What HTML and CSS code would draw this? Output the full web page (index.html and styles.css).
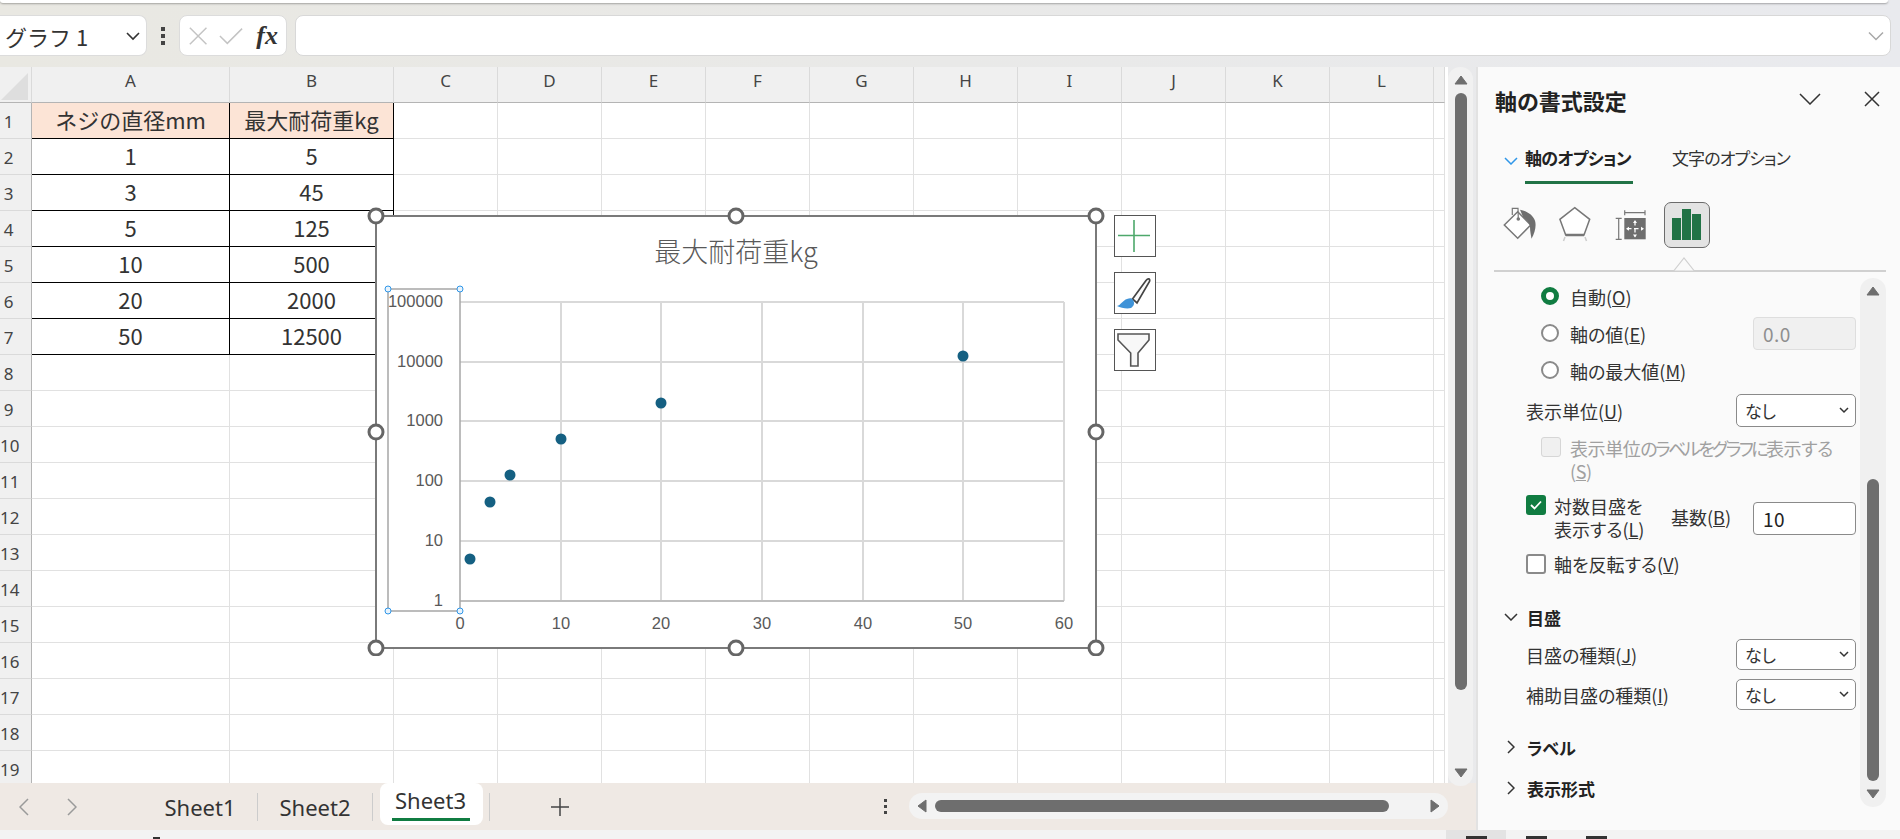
FILE: index.html
```html
<!DOCTYPE html>
<html lang="ja">
<head>
<meta charset="utf-8">
<title>Excel</title>
<link rel="stylesheet" href="styles.css">
</head>
<body>
<div class="ribbon-edge"></div>
<div class="formula-bar">
  <div class="name-box"><span>グラフ 1</span><svg class="ic" width="16" height="10" viewBox="0 0 16 10"><path d="M2 2l6 6 6-6" fill="none" stroke="#333" stroke-width="1.6"/></svg></div>
  <div class="vdots"><i></i><i></i><i></i></div>
  <div class="fx-box">
    <svg width="22" height="22" viewBox="0 0 22 22"><path d="M2 2l18 18M20 2L2 20" fill="none" stroke="#c4c4c4" stroke-width="1.6"/></svg>
    <svg width="26" height="22" viewBox="0 0 26 22"><path d="M1 11l8 8L25 3" fill="none" stroke="#c4c4c4" stroke-width="1.6"/></svg>
    <span class="fx">fx</span>
  </div>
  <div class="formula-input"><svg width="16" height="10" viewBox="0 0 16 10"><path d="M1 1.5l7 7 7-7" fill="none" stroke="#a8a8a8" stroke-width="1.5"/></svg></div>
</div>
<div class="main">
  <div class="workbook">
    <div class="sheet-row">
      <div class="sheet">
        <table class="grid">
          <colgroup><col class="c-head"><col class="c-a"><col class="c-b"><col class="c-n"><col class="c-n"><col class="c-n"><col class="c-n"><col class="c-n"><col class="c-n"><col class="c-n"><col class="c-n"><col class="c-n"><col class="c-n"><col class="c-last"></colgroup>
          <thead><tr><th class="corner"><svg width="29" height="29" viewBox="0 0 29 29"><path d="M28 1V28H1z" fill="#dedede"/></svg></th><th>A</th><th>B</th><th>C</th><th>D</th><th>E</th><th>F</th><th>G</th><th>H</th><th>I</th><th>J</th><th>K</th><th>L</th><th></th></tr></thead>
          <tbody>
            <tr><th>1</th><td class="b hd">ネジの直径mm</td><td class="b hd">最大耐荷重kg</td><td></td><td></td><td></td><td></td><td></td><td></td><td></td><td></td><td></td><td></td><td></td></tr>
            <tr><th>2</th><td class="b">1</td><td class="b">5</td><td></td><td></td><td></td><td></td><td></td><td></td><td></td><td></td><td></td><td></td><td></td></tr>
            <tr><th>3</th><td class="b">3</td><td class="b">45</td><td></td><td></td><td></td><td></td><td></td><td></td><td></td><td></td><td></td><td></td><td></td></tr>
            <tr><th>4</th><td class="b">5</td><td class="b">125</td><td></td><td></td><td></td><td></td><td></td><td></td><td></td><td></td><td></td><td></td><td></td></tr>
            <tr><th>5</th><td class="b">10</td><td class="b">500</td><td></td><td></td><td></td><td></td><td></td><td></td><td></td><td></td><td></td><td></td><td></td></tr>
            <tr><th>6</th><td class="b">20</td><td class="b">2000</td><td></td><td></td><td></td><td></td><td></td><td></td><td></td><td></td><td></td><td></td><td></td></tr>
            <tr><th>7</th><td class="b">50</td><td class="b">12500</td><td></td><td></td><td></td><td></td><td></td><td></td><td></td><td></td><td></td><td></td><td></td></tr>
            <tr><th>8</th><td></td><td></td><td></td><td></td><td></td><td></td><td></td><td></td><td></td><td></td><td></td><td></td><td></td></tr>
            <tr><th>9</th><td></td><td></td><td></td><td></td><td></td><td></td><td></td><td></td><td></td><td></td><td></td><td></td><td></td></tr>
            <tr><th>10</th><td></td><td></td><td></td><td></td><td></td><td></td><td></td><td></td><td></td><td></td><td></td><td></td><td></td></tr>
            <tr><th>11</th><td></td><td></td><td></td><td></td><td></td><td></td><td></td><td></td><td></td><td></td><td></td><td></td><td></td></tr>
            <tr><th>12</th><td></td><td></td><td></td><td></td><td></td><td></td><td></td><td></td><td></td><td></td><td></td><td></td><td></td></tr>
            <tr><th>13</th><td></td><td></td><td></td><td></td><td></td><td></td><td></td><td></td><td></td><td></td><td></td><td></td><td></td></tr>
            <tr><th>14</th><td></td><td></td><td></td><td></td><td></td><td></td><td></td><td></td><td></td><td></td><td></td><td></td><td></td></tr>
            <tr><th>15</th><td></td><td></td><td></td><td></td><td></td><td></td><td></td><td></td><td></td><td></td><td></td><td></td><td></td></tr>
            <tr><th>16</th><td></td><td></td><td></td><td></td><td></td><td></td><td></td><td></td><td></td><td></td><td></td><td></td><td></td></tr>
            <tr><th>17</th><td></td><td></td><td></td><td></td><td></td><td></td><td></td><td></td><td></td><td></td><td></td><td></td><td></td></tr>
            <tr><th>18</th><td></td><td></td><td></td><td></td><td></td><td></td><td></td><td></td><td></td><td></td><td></td><td></td><td></td></tr>
            <tr><th>19</th><td></td><td></td><td></td><td></td><td></td><td></td><td></td><td></td><td></td><td></td><td></td><td></td><td></td></tr>
          </tbody>
        </table>

        <svg class="chart" width="740" height="450" viewBox="366 206 740 450">
          <rect x="376" y="216" width="720" height="432" fill="#fff" stroke="#7a7a7a" stroke-width="2"/>
          <text class="chart-title" x="736" y="262" text-anchor="middle">最大耐荷重kg</text>
          <g stroke="#d9d9d9" stroke-width="2">
            <path d="M460 302H1064M460 362H1064M460 421H1064M460 481H1064M460 541H1064"/>
            <path d="M561 302V601M661 302V601M762 302V601M863 302V601M963 302V601M1064 302V601"/>
          </g>
          <path d="M460 601H1064" stroke="#bfbfbf" stroke-width="2"/>
          <rect x="388" y="289" width="72" height="322" fill="none" stroke="#a6a6a6" stroke-width="1.5"/>
          <g fill="#156082">
            <circle cx="470" cy="559" r="5.5"/><circle cx="490" cy="502" r="5.5"/><circle cx="510" cy="475" r="5.5"/>
            <circle cx="561" cy="439" r="5.5"/><circle cx="661" cy="403" r="5.5"/><circle cx="963" cy="356" r="5.5"/>
          </g>
          <g class="axis" text-anchor="end">
            <text x="443" y="307">100000</text><text x="443" y="367">10000</text><text x="443" y="426">1000</text>
            <text x="443" y="486">100</text><text x="443" y="546">10</text><text x="443" y="606">1</text>
          </g>
          <g class="axis" text-anchor="middle">
            <text x="460" y="629">0</text><text x="561" y="629">10</text><text x="661" y="629">20</text><text x="762" y="629">30</text>
            <text x="863" y="629">40</text><text x="963" y="629">50</text><text x="1064" y="629">60</text>
          </g>
          <g fill="#e8f3fc" stroke="#2f96e8" stroke-width="1">
            <circle cx="388" cy="289" r="3"/><circle cx="460" cy="289" r="3"/><circle cx="388" cy="611" r="3"/><circle cx="460" cy="611" r="3"/>
          </g>
          <g fill="#fff" stroke="#666" stroke-width="3">
            <circle cx="376" cy="216" r="7"/><circle cx="736" cy="216" r="7"/><circle cx="1096" cy="216" r="7"/>
            <circle cx="376" cy="432" r="7"/><circle cx="1096" cy="432" r="7"/>
            <circle cx="376" cy="648" r="7"/><circle cx="736" cy="648" r="7"/><circle cx="1096" cy="648" r="7"/>
          </g>
        </svg>

        <div class="chart-tools">
          <div class="tool"><svg width="40" height="40" viewBox="0 0 40 40"><path d="M3 19.500H35M19 4V36" stroke="#4ea86b" stroke-width="1.6" fill="none"/></svg></div>
          <div class="tool"><svg width="40" height="40" viewBox="0 0 40 40"><path d="M17.500 26L31 7.500c2-2.500 4.500-2 3.500 1L22 30z" fill="#fafafa" stroke="#444" stroke-width="1.700"/><path d="M2 33c4-1 6-6 10-7 3-1 5-1 6 1 2 3 1 6-2 8-4 1-10 0-14-2z" fill="#3f93d8"/></svg></div>
          <div class="tool"><svg width="40" height="40" viewBox="0 0 40 40"><path d="M3 4H34V10L23 23V36H15.700V23L3 10z" fill="#f8f8f8" stroke="#555" stroke-width="1.600"/></svg></div>
        </div>
      </div>
      <div class="vscroll">
        <svg width="14" height="10" viewBox="0 0 14 10"><path d="M7 1l6 8H1z" fill="#6e6e6e" stroke="#6e6e6e" stroke-linejoin="round"/></svg>
        <div class="vthumb"></div>
        <svg width="14" height="10" viewBox="0 0 14 10"><path d="M7 9L1 1h12z" fill="#6e6e6e" stroke="#6e6e6e" stroke-linejoin="round"/></svg>
      </div>
    </div>
    <div class="tabs">
      <div class="tab-nav">
        <svg width="10" height="18" viewBox="0 0 10 18"><path d="M9 1L1 9l8 8" fill="none" stroke="#9a9a9a" stroke-width="1.500"/></svg>
        <svg width="10" height="18" viewBox="0 0 10 18"><path d="M1 1l8 8-8 8" fill="none" stroke="#9a9a9a" stroke-width="1.500"/></svg>
      </div>
      <div class="tab t1">Sheet1</div>
      <div class="tab t2">Sheet2</div>
      <div class="tab active">Sheet3</div>
      <div class="tab-sep"></div>
      <svg class="plus" width="18" height="18" viewBox="0 0 18 18"><path d="M0 9H18M9 0V18" stroke="#444" stroke-width="1.500"/></svg>
      <div class="vdots small"><i></i><i></i><i></i></div>
      <div class="hscroll">
        <svg width="10" height="14" viewBox="0 0 10 14"><path d="M1 7l8-6v12z" fill="#6e6e6e" stroke="#6e6e6e" stroke-linejoin="round"/></svg>
        <div class="hthumb"></div>
        <svg width="10" height="14" viewBox="0 0 10 14"><path d="M9 7L1 1v12z" fill="#6e6e6e" stroke="#6e6e6e" stroke-linejoin="round"/></svg>
      </div>
    </div>
  </div>

  <aside class="panel">
    <div class="panel-head">
      <h1>軸の書式設定</h1>
      <svg class="p-chev" width="22" height="12" viewBox="0 0 22 12"><path d="M1 1l10 10L21 1" fill="none" stroke="#333" stroke-width="1.500"/></svg>
      <svg class="p-close" width="16" height="16" viewBox="0 0 16 16"><path d="M1 1l14 14M15 1L1 15" fill="none" stroke="#333" stroke-width="1.500"/></svg>
    </div>
    <div class="panel-tabs">
      <svg width="14" height="8" viewBox="0 0 14 8"><path d="M1 1l6 6 6-6" fill="none" stroke="#2f96e8" stroke-width="1.500"/></svg>
      <div class="ptab on">軸のオプション</div>
      <div class="ptab">文字のオプション</div>
    </div>
    <div class="panel-icons">
      <svg class="i-fill" width="36" height="36" viewBox="0 0 36 36"><path d="M1.300 19L14.700 5.700 27.700 19 14.700 32.300z" fill="#fff" stroke="#777" stroke-width="1.500"/><path d="M9.300 9V2.300H15L15.300 13" fill="none" stroke="#777" stroke-width="1.200"/><circle cx="15.300" cy="13" r="1.800" fill="#777"/><path d="M17 3.700c6 1 13 5 15 11 1.500 5 0 12-3.500 18-.5-4-1.500-7-1.500-12 0-4-4-7-7-10z" fill="#6e6e6e"/></svg>
      <svg class="i-shape" width="32" height="38" viewBox="0 0 32 38"><path d="M15.700 2.700L30.700 14.300 25 30H6.700L.9 14.300z" fill="#fff" stroke="#777" stroke-width="1.500"/><path d="M6.700 30H25" stroke="#777" stroke-width="2.500"/><path d="M6 32L4.500 36M26 32l1.500 4" stroke="#ccc" stroke-width="1.500"/></svg>
      <svg class="i-size" width="32" height="36" viewBox="0 0 32 36"><path d="M9.700 6.700H30M9.700 4.200V9.200M30 4.200V9.200M3.700 12.300V33.300M.7 12.300H6.700M.7 33.300H6.700" fill="none" stroke="#777" stroke-width="1.200"/><rect x="9.300" y="12" width="21.400" height="21.300" fill="#6e6e6e"/><path d="M20 15V30.500M12 22.700H28" stroke="#fff" stroke-width="1.300" stroke-dasharray="4.500 2.500"/><path d="M20 14l-2 3h4zM20 31.500l-2-3h4zM11 22.700l3-2v4zM29 22.700l-3-2v4z" fill="#fff"/></svg>
      <div class="i-bars"><svg width="44" height="44" viewBox="0 0 44 44"><path d="M7 15h9v22H7zM17 6h9v31h-9zM27 11h9v26h-9z" fill="#217346"/></svg></div>
    </div>
    <div class="panel-rule"><svg width="22" height="14" viewBox="0 0 22 14"><path d="M0 13.500H1L11 1l10 12.500h1" fill="#fafafa" stroke="#d0d0d0" stroke-width="1.200"/></svg></div>
    <div class="panel-body">
      <div class="opts">
        <div class="row r-radio"><span class="radio on"></span><span>自動(<u>O</u>)</span></div>
        <div class="row r-radio"><span class="radio"></span><span>軸の値(<u>E</u>)</span><span class="field ro">0.0</span></div>
        <div class="row r-radio"><span class="radio"></span><span>軸の最大値(<u>M</u>)</span></div>
        <div class="row r-sel mt5"><span>表示単位(<u>U</u>)</span><span class="select tall">なし<svg width="10" height="7" viewBox="0 0 10 7"><path d="M1 1l4 4 4-4" fill="none" stroke="#333" stroke-width="1.500"/></svg></span></div>
        <div class="row r-disabled"><span class="check dis"></span><span class="dis-text">表示単位<span class="kana">のラベルをグラフに</span>表示する<br>(<u>S</u>)</span></div>
        <div class="row r-log"><span class="check on"><svg width="14" height="12" viewBox="0 0 14 12"><path d="M2 6l3.500 3.500L12 2.500" fill="none" stroke="#fff" stroke-width="1.800"/></svg></span><span class="log-text">対数目盛を<br>表示する(<u>L</u>)</span><span class="base">基数(<u>B</u>)</span><span class="field">10</span></div>
        <div class="row r-rev"><span class="check"></span><span>軸を反転する(<u>V</u>)</span></div>
        <div class="sec mt31"><svg width="14" height="8" viewBox="0 0 14 8"><path d="M1 1l6 6 6-6" fill="none" stroke="#333" stroke-width="1.500"/></svg><b>目盛</b></div>
        <div class="row r-sel2 mt10"><span>目盛の種類(<u>J</u>)</span><span class="select">なし<svg width="10" height="7" viewBox="0 0 10 7"><path d="M1 1l4 4 4-4" fill="none" stroke="#333" stroke-width="1.500"/></svg></span></div>
        <div class="row r-sel2 mt9"><span>補助目盛の種類(<u>I</u>)</span><span class="select">なし<svg width="10" height="7" viewBox="0 0 10 7"><path d="M1 1l4 4 4-4" fill="none" stroke="#333" stroke-width="1.500"/></svg></span></div>
        <div class="sec mt25"><svg class="cr" width="8" height="14" viewBox="0 0 8 14"><path d="M1 1l6 6-6 6" fill="none" stroke="#333" stroke-width="1.500"/></svg><b>ラベル</b></div>
        <div class="sec mt17"><svg class="cr" width="8" height="14" viewBox="0 0 8 14"><path d="M1 1l6 6-6 6" fill="none" stroke="#333" stroke-width="1.500"/></svg><b>表示形式</b></div>
      </div>
      <div class="pscroll">
        <svg width="14" height="10" viewBox="0 0 14 10"><path d="M7 1l6 8H1z" fill="#6e6e6e" stroke="#6e6e6e" stroke-linejoin="round"/></svg>
        <div class="pthumb"></div>
        <svg width="14" height="10" viewBox="0 0 14 10"><path d="M7 9L1 1h12z" fill="#6e6e6e" stroke="#6e6e6e" stroke-linejoin="round"/></svg>
      </div>
    </div>
  </aside>
</div>
<div class="status">
  <div class="st-mark"></div>
  <div class="views">
    <div class="view on"><i></i></div>
    <div class="view"><i></i></div>
    <div class="view"><i></i></div>
  </div>
</div>
</body>
</html>
```
FILE: styles.css
```css
* { box-sizing: border-box; }
html, body { margin: 0; padding: 0; }
body {
  width: 1900px; height: 839px; overflow: hidden;
  display: flex; flex-direction: column;
  background: linear-gradient(90deg, #e9e8e2, #e9eaee);
  font-family: "Noto Sans CJK JP", "Noto Sans", sans-serif;
  color: #333;
}
.ribbon-edge {
  height: 3px; flex: none; width: 1888px;
  background: #fff; border-radius: 0 0 8px 8px;
  box-shadow: 0 1px 2px rgba(0,0,0,.3);
}
.formula-bar {
  height: 41px; flex: none; margin-top: 12px;
  display: flex; align-items: stretch;
}
.name-box {
  width: 147px; background: #fff; border: 1px solid #dcdcdc; border-left: 0;
  border-radius: 0 8px 8px 0;
  display: flex; align-items: center; justify-content: space-between;
  padding: 0 5px 0 5px; font-size: 22px; color: #333;
}
.vdots { width: 32px; display: flex; flex-direction: column; align-items: center; justify-content: center; gap: 3px; }
.vdots i { width: 4px; height: 4px; background: #444; display: block; }
.fx-box {
  width: 108px; background: #fff; border: 1px solid #dcdcdc; border-radius: 8px;
  display: flex; align-items: center; padding: 0 8px; gap: 11px;
}
.fx { font-family: "Liberation Serif", serif; font-style: italic; font-weight: 700; font-size: 26px; color: #333; line-height: 1; margin-left: 2px; }
.formula-input {
  width: 1596px; margin-left: 8px; background: #fff; border: 1px solid #d8d8d8; border-radius: 8px;
  display: flex; align-items: center; justify-content: flex-end; padding-right: 6px;
}
.main { flex: none; height: 763px; margin-top: 11px; display: flex; }
.workbook { width: 1476px; display: flex; flex-direction: column; }
.sheet-row { height: 716px; display: flex; position: relative; }
.sheet { width: 1448px; height: 716px; position: relative; overflow: hidden; background: #fff; }

.grid { border-collapse: separate; border-spacing: 0; table-layout: fixed; width: 1445px; background: #fff; }
.c-head { width: 32px; } .c-a { width: 198px; } .c-b { width: 164px; } .c-n { width: 104px; } .c-last { width: 11px; }
.grid thead th {
  height: 36px; background: #f0f0f0; font-weight: 400; font-size: 17px; color: #444;
  border-right: 1px solid #dadada; border-bottom: 1px solid #b4b4b4;
  padding: 0 0 9px; text-align: center; font-family: "Noto Sans", sans-serif; line-height: 1;
}
.grid thead th.corner { padding: 0; vertical-align: middle; }
.corner svg { display: block; margin: 3px 0 0; }
.grid tbody th {
  height: 36px; background: #f0f0f0; font-weight: 400; font-size: 17px; color: #444;
  border-right: 1px solid #b4b4b4; border-bottom: 1px solid #dadada;
  text-align: center; padding: 2px 14px 0 0; font-family: "Noto Sans", sans-serif; line-height: 1; overflow: hidden;
}
.grid td {
  height: 36px; border-right: 1px solid #e1e1e1; border-bottom: 1px solid #e1e1e1;
  padding: 0 0 4px; font-size: 22px; text-align: center; color: #333; line-height: 1;
}
.grid td.b { border-right: 1px solid #000; border-bottom: 1px solid #000; }
.grid td.hd { background: #fce4d6; }

.chart { position: absolute; left: 366px; top: 139px; }
.chart-title { font-size: 27px; fill: #595959; font-family: "Noto Sans CJK JP", sans-serif; font-weight: 300; }
.axis text { font-family: "Liberation Sans", sans-serif; font-size: 16.500px; fill: #595959; }
.chart-tools { position: absolute; left: 1114px; top: 148px; display: flex; flex-direction: column; gap: 15px; }
.tool { width: 42px; height: 42px; border: 1.500px solid #555; background: #fff; }
.tool svg { display: block; }

.vscroll {
  width: 25px; height: 719px; background: #f1f1f1; border-radius: 12px; position: relative; z-index: 2;
  display: flex; flex-direction: column; align-items: center; padding: 8px 0 8px; justify-content: space-between;
}
.vthumb { width: 12px; flex: 1; background: #6e6e6e; border-radius: 6px; margin: 8px 0 78px; }

.tabs {
  height: 47px; display: flex; align-items: center; position: relative;
  background: #efe9e4; font-family: "Noto Sans", sans-serif;
}
.tab-nav { width: 148px; padding-left: 19px; display: flex; gap: 38px; flex: none; }
.tab { font-size: 22px; color: #333; flex: none; text-align: center; line-height: 1; }
.t1 { width: 110px; border-right: 1px solid #ccc; height: 28px; padding: 3px 5px 0 0; }
.t2 { width: 115px; height: 28px; padding-top: 3px; border-right: 1px solid #ccc; }
.tab.active {
  width: 103px; height: 42px; margin: 0 0 0 7px; background: #fff; border-radius: 8px;
  align-self: flex-start; padding: 6px 2px 0 0; position: relative;
}
.tab.active::after { content: ""; position: absolute; left: 12px; right: 13px; top: 35px; height: 3px; background: #107c41; }
.tab-sep { width: 1px; height: 28px; background: #ccc; margin-left: 6px; flex: none; }
.plus { margin-left: 61px; flex: none; }
.vdots.small { width: 10px; margin-left: 311px; flex: none; }
.vdots.small i { width: 3px; height: 3px; }
.hscroll {
  width: 539px; height: 26px; background: #f3f3f3; border-radius: 13px; margin-left: 19px; flex: none;
  display: flex; align-items: center; padding: 0 8px; margin-top: -2px;
}
.hthumb { height: 12px; width: 454px; background: #6e6e6e; border-radius: 6px; margin: 0 41px 0 8px; }

.panel { width: 424px; height: 763px; background: #fafafa; border-left: 2px solid #e2e2e2; display: flex; flex-direction: column; flex: none; }
.panel-head { height: 65px; display: flex; align-items: center; padding: 0 0 0 17px; flex: none; }
.panel-head h1 { margin: 0; font-size: 22px; font-weight: 700; color: #222; line-height: 1; width: 304px; font-feature-settings: "palt"; }
.p-chev { margin-top: -1px; }
.p-close { margin-left: 43px; margin-top: -1px; }
.panel-tabs { height: 52px; display: flex; align-items: flex-start; padding-left: 26px; flex: none; }
.panel-tabs svg { margin-top: 25px; }
.ptab { font-size: 17px; line-height: 1; padding: 17px 0 0 0; height: 52px; font-feature-settings: "palt"; color: #333; margin-left: 39px; letter-spacing: -.9px; }
.ptab.on { font-weight: 700; margin-left: 7px; width: 108px; border-bottom: 3px solid #217346; white-space: nowrap; color: #222; letter-spacing: -.7px; }
.panel-icons { height: 85px; padding: 18px 0 0 25px; display: flex; align-items: flex-start; flex: none; }
.i-fill { margin-top: 4px; }
.i-shape { margin: 3px 0 0 20px; }
.i-size { margin: 4px 0 0 24px; }
.i-bars { width: 46px; height: 46px; background: #e3e3e3; border: 1.500px solid #6b6b6b; border-radius: 7px; margin: 0 0 0 17px; }
.i-bars svg { display: block; }
.panel-rule { height: 2px; background: #d0d0d0; margin: 1px 14px 0 16px; position: relative; flex: none; }
.panel-rule svg { position: absolute; left: 179px; top: -13px; }

.panel-body { display: flex; flex: 1; min-height: 0; padding-top: 6px; }
.opts { width: 382px; padding: 0 4px 0 48px; font-size: 18px; color: #333; font-feature-settings: "palt"; }
.pscroll {
  width: 26px; height: 529px; background: #f0f0f0; border-radius: 13px;
  display: flex; flex-direction: column; align-items: center; justify-content: space-between; padding: 8px 0;
}
.pthumb { width: 12px; flex: 1; background: #6e6e6e; border-radius: 6px; margin: 183px 0 8px; }
.row { display: flex; align-items: center; line-height: 1; }
.r-radio { height: 37px; padding-left: 15px; }
.radio { width: 18px; height: 18px; border-radius: 50%; border: 2.500px solid #8a8a8a; background: #fff; margin-right: 11px; flex: none; position: relative; top: -1px; }
.radio.on { border: 5px solid #107c41; }
.field { margin-left: auto; width: 103px; height: 33px; border: 1px solid #8a8a8a; border-radius: 4px; background: #fff; padding: 0 9px; line-height: 31px; font-size: 19px; letter-spacing: .5px; color: #222; }
.field.ro { background: #f0f0f0; border-color: #dedede; color: #8f8f8f; }
.select { margin-left: auto; width: 120px; height: 31px; border: 1px solid #8a8a8a; border-radius: 5px; background: #fff; display: flex; align-items: center; justify-content: space-between; padding: 0 6px 0 8px; font-size: 17px; }
.select.tall { height: 33px; }
.r-sel { height: 33px; }
.r-disabled { align-items: flex-start; margin-top: 10px; padding-left: 15px; }
.check { width: 20px; height: 20px; border: 2.500px solid #8a8a8a; border-radius: 3px; background: #fff; flex: none; margin-right: 8px; display: flex; align-items: center; justify-content: center; }
.check.dis { border: 1.500px solid #d6d6d6; background: #f0f0f0; margin-right: 9px; }
.check.on { background: #107c41; border: 0; }
.dis-text { color: #a0a0a0; line-height: 23px; letter-spacing: -.4px; }
.kana { letter-spacing: -2.600px; }
.r-log { margin-top: 12px; height: 47px; align-items: flex-start; }
.log-text { line-height: 23px; width: 117px; }
.base { margin-top: 13px; }
.r-log .field { margin-top: 7px; }
.r-rev { margin-top: 12px; height: 20px; }
.sec { height: 24px; display: flex; align-items: center; margin-left: -22px; gap: 9px; }
.sec svg { flex: none; }
.sec .cr { margin: 0 3px; }
.sec b { font-size: 17px; color: #222; }
.r-sel2 { height: 31px; }
.mt5 { margin-top: 5px; } .mt9 { margin-top: 9px; } .mt10 { margin-top: 10px; }
.mt17 { margin-top: 17px; } .mt25 { margin-top: 25px; } .mt31 { margin-top: 31px; }

.status { height: 9px; flex: none; background: #f3f3f3; display: flex; overflow: hidden; position: relative; }
.st-mark { width: 7px; height: 2px; background: #333; margin: 7px 0 0 153px; }
.views { margin-left: auto; margin-right: 274px; display: flex; }
.view { width: 60px; height: 9px; display: flex; justify-content: center; padding-top: 6px; }
.view.on { background: #e3e3e3; }
.view i { display: block; width: 21px; height: 3px; background: #333; }
```
